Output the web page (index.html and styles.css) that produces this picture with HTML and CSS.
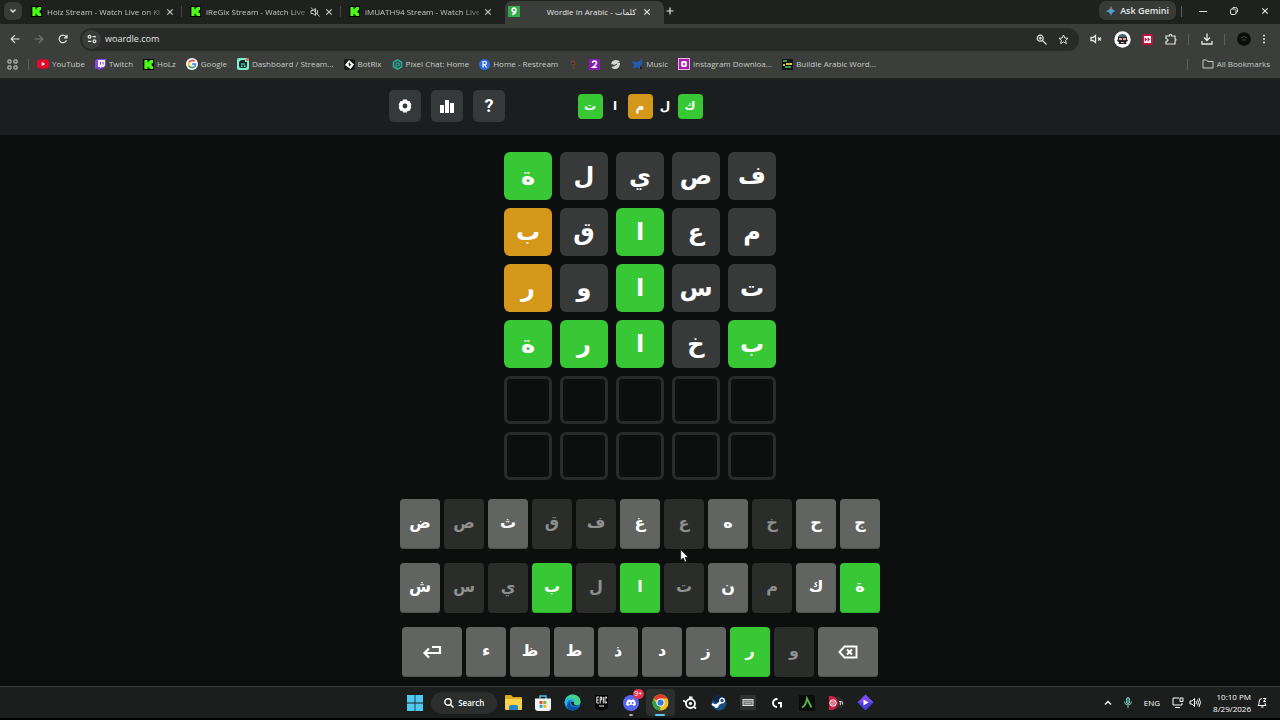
FILE: index.html
```html
<!DOCTYPE html>
<html lang="en">
<head>
<meta charset="utf-8">
<title>Wordle in Arabic - كلمات</title>
<link rel="stylesheet" href="styles.css">
</head>
<body>
<svg class="defs" aria-hidden="true">
  <symbol id="kick" viewBox="0 0 12 12"><path fill="#000" d="M0 0h12v12H0z"/><path fill="#4dfc16" d="M1.500 1h3.500v2.500h1V2h1.500V1H11v3.500H9.500v3H11V11H7.500v-1H6V8.500H5V11H1.500z"/></symbol>
  <symbol id="x" viewBox="0 0 8 8"><path d="M1.300 1.300l5.400 5.400M6.700 1.300L1.300 6.700" fill="none" stroke="currentColor" stroke-width="1.200"/></symbol>
</svg>

<div class="browser">
  <div class="tabstrip">
    <button class="tab-search" aria-label="Search tabs"><svg width="8" height="8" viewBox="0 0 8 8"><path d="M1.500 2.500L4 5l2.500-2.500" fill="none" stroke="currentColor" stroke-width="1.400"/></svg></button>
    <div class="tabs">
      <div class="tab"><svg width="11" height="11"><use href="#kick"/></svg><span class="tab-title">Holz Stream - Watch Live on Ki</span><button class="close" aria-label="Close tab"><svg width="8" height="8"><use href="#x"/></svg></button></div>
      <div class="tab"><svg width="11" height="11"><use href="#kick"/></svg><span class="tab-title">iReGix Stream - Watch Live</span><svg width="10" height="10" viewBox="0 0 10 10" fill="none" stroke="currentColor"><path d="M1 3.500h2L5.500 1.500v7L3 6.500H1zM7 3q1.500 2 0 4M1 .5l8.500 9"/></svg><button class="close" aria-label="Close tab"><svg width="8" height="8"><use href="#x"/></svg></button></div>
      <div class="tab"><svg width="11" height="11"><use href="#kick"/></svg><span class="tab-title">iMUATH94 Stream - Watch Live</span><button class="close" aria-label="Close tab"><svg width="8" height="8"><use href="#x"/></svg></button></div>
      <div class="tab active"><svg width="12" height="11" viewBox="0 0 12 11"><path fill="#32ad4a" d="M0 0h12v11H0z"/><path d="M8 4.500a2 2 0 1 1-.2-1.500q.8 5-3.800 5.500" fill="none" stroke="#fff" stroke-width="1.600"/></svg><span class="tab-title">Wordle in Arabic - <bdi>كلمات</bdi></span><button class="close" aria-label="Close tab"><svg width="8" height="8"><use href="#x"/></svg></button></div>
    </div>
    <button class="new-tab" aria-label="New tab"><svg width="8" height="8" viewBox="0 0 8 8"><path d="M4 .5v7M.5 4h7" stroke="currentColor" stroke-width="1.200"/></svg></button>
    <button class="gemini"><svg width="10" height="10" viewBox="0 0 10 10"><path fill="#4b9cf0" d="M5 0q.8 4.200 5 5-4.200.8-5 5-.8-4.200-5-5 4.200-.8 5-5"/><path fill="#e3594e" d="M5 0q.4 2.300 1.500 3.500h-3Q4.600 2.300 5 0"/><path fill="#3fb984" d="M0 5q2.500-.4 3.600-1.500L5 5 3.500 6.600Q2.300 5.500 0 5"/></svg>Ask Gemini</button>
    <span class="rule"></span>
    <div class="window-buttons">
      <button aria-label="Minimize"><svg width="8" height="8" viewBox="0 0 8 8"><path d="M0 4.500h8" stroke="currentColor"/></svg></button>
      <button aria-label="Restore"><svg width="8" height="8" viewBox="0 0 8 8" fill="none" stroke="currentColor"><rect x=".5" y="2" width="5.500" height="5.500" rx="1.500"/><path d="M2.300 1.800Q2.400.5 4 .5h1.500q2 0 2 2V4q0 1.500-1.300 1.700"/></svg></button>
      <button aria-label="Close"><svg width="8" height="8"><use href="#x"/></svg></button>
    </div>
  </div>

  <div class="toolbar">
    <div class="nav">
      <button aria-label="Back"><svg width="10" height="10" viewBox="0 0 10 10" fill="none" stroke="currentColor" stroke-width="1.200"><path d="M9.500 5H1.500M5 1.200L1.200 5 5 8.800"/></svg></button>
      <button class="dim" aria-label="Forward"><svg width="10" height="10" viewBox="0 0 10 10" fill="none" stroke="currentColor" stroke-width="1.200"><path d="M.5 5h8M5 1.200L8.800 5 5 8.800"/></svg></button>
      <button aria-label="Reload"><svg width="10" height="10" viewBox="0 0 10 10" fill="none" stroke="currentColor" stroke-width="1.200"><path d="M8.500 6.200A3.800 3.800 0 1 1 7.900 2.500L9 3.700M9 .8v3H6"/></svg></button>
    </div>
    <div class="omnibox">
      <button class="site" aria-label="Site information"><svg width="10" height="10" viewBox="0 0 10 10" fill="none" stroke="currentColor" stroke-width="1.200"><circle cx="2.500" cy="2.700" r="1.400"/><path d="M5.500 2.700H9M1 7.300h3.500"/><circle cx="7.500" cy="7.300" r="1.400"/></svg></button>
      <input type="text" value="woardle.com" aria-label="Address">
      <button aria-label="Zoom"><svg width="11" height="11" viewBox="0 0 11 11" fill="none" stroke="currentColor" stroke-width="1.200"><circle cx="4.200" cy="4.200" r="3"/><path d="M6.500 6.500l4 4M2.700 4.200h3M4.200 2.700v3"/></svg></button>
      <button aria-label="Bookmark this tab"><svg width="11" height="11" viewBox="0 0 11 11" fill="none" stroke="currentColor"><path d="M5.500 1l1.300 3 3.200.3-2.400 2.100.7 3.200-2.800-1.700-2.800 1.700.7-3.200L1 4.300 4.200 4z"/></svg></button>
    </div>
    <div class="extensions">
      <button aria-label="Muted"><svg width="12" height="10" viewBox="0 0 12 10" fill="none" stroke="currentColor" stroke-width="1.300"><path d="M1 3.500h2L5.500 1.500v7L3 6.500H1zM8 3.500l3 3M11 3.500l-3 3"/></svg></button>
      <button aria-label="Avatar extension"><svg width="17" height="17" viewBox="0 0 17 17"><circle cx="8.500" cy="8.500" r="8.200" fill="#fff"/><path fill="#3f6c73" d="M4 6q1-3 4.500-3T13 6z"/><path fill="#25262b" d="M4 6h9v2l1 2-2 1 .5 2h-8L5 11 3 10l1-2z"/><path fill="#dfa89b" d="M5 7h3v2H5zM9 7h3v2H9zM7 11h3v1H7z"/></svg></button>
      <button aria-label="Video speed"><svg width="11" height="11" viewBox="0 0 11 11"><rect width="11" height="11" rx="2" fill="#c4103c"/><path fill="#fff" d="M2 2h7v7H2z"/><path fill="#c4103c" d="M2.700 3.300l2.600 2.200-2.600 2.200zM5.600 3.300l2.600 2.200-2.600 2.200z"/></svg></button>
      <button class="puzzle" aria-label="Extensions"><svg width="12" height="12" viewBox="0 0 12 12" fill="none" stroke="currentColor" stroke-width="1.200"><path d="M1 3h3.500V2q1-1.500 2 0v1H10v3q2 .7 0 2v3H1V8.500q2-.2 2-1.500T1 5.500z"/></svg></button>
      <span class="rule"></span>
      <button aria-label="Downloads"><svg width="12" height="12" viewBox="0 0 12 12" fill="none" stroke="currentColor" stroke-width="1.300"><path d="M6 .5V7M3 4.500L6 7.500l3-3M1 8v3h10V8"/></svg></button>
      <span class="rule"></span>
      <button aria-label="Profile"><svg width="14" height="14" viewBox="0 0 14 14"><circle cx="7" cy="7" r="6.800" fill="#0c0d0c"/><path d="M4 6q3-3 6 0M5 8h4" stroke="#444" fill="none"/></svg></button>
      <button aria-label="Menu"><svg width="4" height="10" viewBox="0 0 4 10" fill="currentColor"><circle cx="2" cy="1.500" r="1"/><circle cx="2" cy="5" r="1"/><circle cx="2" cy="8.500" r="1"/></svg></button>
    </div>
  </div>

  <nav class="bookmarks">
    <button aria-label="Apps"><svg width="11" height="11" viewBox="0 0 11 11" fill="none" stroke="currentColor"><path d="M1 1h3v3H1zM7 1h3v3H7zM1 7h3v3H1zM7 7h3v3H7z"/></svg></button>
    <span class="rule"></span>
    <a href="#"><svg width="12" height="12" viewBox="0 0 12 12"><rect y="1.500" width="12" height="9" rx="2" fill="#e6082d"/><path fill="#fff" d="M4.800 4l3.400 2-3.400 2z"/></svg>YouTube</a>
    <a href="#"><svg width="11" height="11" viewBox="0 0 11 11"><path fill="#8a45e8" d="M2 0h9v7L8 9.500H6L4.500 11H3V9.500H0V2z"/><path fill="#eee" d="M3 1h7v5.500L8.500 8h-2L5 9.300V8H3z"/><path fill="#8a45e8" d="M5 3h1v2.500H5zM7.500 3h1v2.500h-1z"/></svg>Twitch</a>
    <a href="#"><svg width="11" height="11"><use href="#kick"/></svg>HoLz</a>
    <a href="#"><svg width="12" height="12" viewBox="0 0 12 12"><circle cx="6" cy="6" r="6" fill="#fff"/><g fill="none" stroke-width="1.700"><path stroke="#e94335" d="M3 4.200A3.600 3.600 0 0 1 8.500 3.400"/><path stroke="#fabc05" d="M3 4.200a3.600 3.600 0 0 0 0 3.600"/><path stroke="#34a853" d="M3 7.800a3.600 3.600 0 0 0 5.500.8"/><path stroke="#4285f4" d="M8.500 8.600Q9.500 7.600 9.500 6H6"/></g></svg>Google</a>
    <a href="#"><svg width="12" height="12" viewBox="0 0 12 12"><rect width="12" height="12" rx="2" fill="#7df0cb"/><path fill="#0a2c2a" d="M2 5q0-3 4-3h2v2h2v4q0 2-2 2H4Q2 10 2 8z"/><path fill="#7df0cb" d="M4 5.500h4v1H4zM4 7.500h1.500V9H4zM7 7.500h1.500V9H7z"/><circle cx="10.300" cy="1.500" r="1.500" fill="#f05a4e"/></svg>Dashboard / Stream...</a>
    <a href="#"><svg width="11" height="11" viewBox="0 0 11 11"><rect width="11" height="11" rx="2" fill="#17191a"/><path fill="#fff" d="M5 1l5 4.500L6.500 10 1 6z"/><path fill="#222" d="M4.500 4l2-.5L6 5l1.500.5L5 7.500z"/></svg>BotRix</a>
    <a href="#"><svg width="11" height="11" viewBox="0 0 11 11" fill="none" stroke="#21b89a"><path d="M5.500.8l4 2.300v4.800l-4 2.300-4-2.300V3.100z" stroke-width="1.400"/><path stroke-width="1.300" d="M4 9V5.500A1.600 1.600 0 1 1 5.500 7"/></svg>Pixel Chat: Home</a>
    <a href="#"><svg width="11" height="11" viewBox="0 0 11 11"><circle cx="5.500" cy="5.500" r="5.500" fill="#2d6be0"/><path d="M4 8.500v-6h2q1.500.2 1.500 1.600T6 5.700H4M5.700 5.700L7.500 8.500" fill="none" stroke="#fff" stroke-width="1.200"/></svg>Home - Restream</a>
    <a href="#" aria-label="Profile"><svg width="11" height="11" viewBox="0 0 11 11"><path fill="#684231" d="M3 2q2-2 4 0l1 3-2 2 1 3H4L5 7 3 5z"/><path fill="#252525" d="M4 4h2v1H4z"/></svg></a>
    <a href="#" aria-label="Two"><svg width="11" height="11" viewBox="0 0 11 11"><path fill="#8a1bb5" d="M0 0h11v11H0z"/><path d="M3.500 4Q3.700 2 5.500 2t2 1.700Q7.500 5 3.800 8.300h4" fill="none" stroke="#fff" stroke-width="1.500"/></svg></a>
    <a href="#" aria-label="Bird"><svg width="11" height="11" viewBox="0 0 11 11"><path fill="#d5d5d2" d="M1 5q1-4 5-4 3 0 4 2L7 4h3q0 5-4 6-4 0-4.500-2L5 7z"/><path d="M2 6q3 1 5-1" stroke="#333" fill="none"/></svg></a>
    <a href="#"><svg width="12" height="11" viewBox="0 0 12 11"><path fill="#235cae" d="M0 1l4 2h3l4-3v5L9 7v3L6 8l-4 2 1-4z"/><circle cx="10" cy="9" r="1" fill="#101010"/></svg>Music</a>
    <a href="#"><svg width="12" height="12" viewBox="0 0 12 12"><path fill="#e6b4e6" d="M0 0h12v12H0z"/><path fill="#a81caa" d="M1 1h10v10H1z"/><rect x="3" y="3" width="6" height="6" rx="2" fill="#fff"/><circle cx="6" cy="6" r="1.500" fill="#c858c4"/></svg>Instagram Downloa...</a>
    <a href="#"><svg width="11" height="11" viewBox="0 0 11 11"><path fill="#111" d="M0 0h11v11H0z"/><path fill="#2c9c52" d="M1 1h4v2H1zM3 7h6v2H3z"/><path fill="#d0c83d" d="M4 4h6v2H4zM1 5h2v2H1z"/></svg>Buildle Arabic Word...</a>
    <span class="rule push"></span>
    <a href="#"><svg width="12" height="10" viewBox="0 0 12 10" fill="none" stroke="currentColor"><path d="M1 1h3.500l1 1.500H11V9H1z"/></svg>All Bookmarks</a>
  </nav>
</div>

<header class="game-header">
  <div class="header-inner">
    <div class="actions">
      <button aria-label="Settings"><svg width="14" height="14" viewBox="0 0 14 14"><path fill="#fff" fill-rule="evenodd" d="M5 .5h4l.6 1.700 1.800-.2 2 3.400L12.600 7l.8 1.600-2 3.400-1.800-.2L9 13.500H5l-.6-1.700-1.800.2-2-3.400L1.400 7 .6 5.400 2.600 2l1.800.2zM7 4.600a2.400 2.400 0 1 0 0 4.800 2.400 2.400 0 0 0 0-4.800"/></svg></button>
      <button aria-label="Statistics"><svg width="14" height="14" viewBox="0 0 14 14" fill="#fff"><path d="M0 6h4v8H0zM5 1h4v13H5zM10 4h4v10h-4z"/></svg></button>
      <button aria-label="Help">?</button>
    </div>
    <h1 class="logo"><span class="hit">ت</span><span>ا</span><span class="near">م</span><span>ل</span><span class="hit">ك</span></h1>
  </div>
</header>

<main class="game">
  <div class="board">
    <span class="tile hit">ة</span><span class="tile miss">ل</span><span class="tile miss">ي</span><span class="tile miss">ص</span><span class="tile miss">ف</span>
    <span class="tile near">ب</span><span class="tile miss">ق</span><span class="tile hit">ا</span><span class="tile miss">ع</span><span class="tile miss">م</span>
    <span class="tile near">ر</span><span class="tile miss">و</span><span class="tile hit">ا</span><span class="tile miss">س</span><span class="tile miss">ت</span>
    <span class="tile hit">ة</span><span class="tile hit">ر</span><span class="tile hit">ا</span><span class="tile miss">خ</span><span class="tile hit">ب</span>
    <span class="tile"></span><span class="tile"></span><span class="tile"></span><span class="tile"></span><span class="tile"></span>
    <span class="tile"></span><span class="tile"></span><span class="tile"></span><span class="tile"></span><span class="tile"></span>
  </div>

  <div class="keyboard">
    <div class="row"><button>ض</button><button class="out">ص</button><button>ث</button><button class="out">ق</button><button class="out">ف</button><button>غ</button><button class="out">ع</button><button>ه</button><button class="out">خ</button><button>ح</button><button>ج</button></div>
    <div class="row"><button>ش</button><button class="out">س</button><button class="out">ي</button><button class="hit">ب</button><button class="out">ل</button><button class="hit">ا</button><button class="out">ت</button><button>ن</button><button class="out">م</button><button>ك</button><button class="hit">ة</button></div>
    <div class="row"><button class="wide" aria-label="Enter"><svg width="20" height="14" viewBox="0 0 20 14" fill="none" stroke="#fff" stroke-width="2.200"><path d="M10 2h8v6H3M7 3.500L2.500 8 7 12.500"/></svg></button><button>ء</button><button>ظ</button><button>ط</button><button>ذ</button><button>د</button><button>ز</button><button class="hit">ر</button><button class="out">و</button><button class="wide" aria-label="Backspace"><svg width="20" height="14" viewBox="0 0 20 14" fill="none" stroke="#fff" stroke-width="1.900"><path d="M6.500 1.500H18.500v11H6.500L1.500 7zM9 4.500l5 5M14 4.500L9 9.500"/></svg></button></div>
  </div>
</main>

<footer class="taskbar">
  <div class="apps">
    <button aria-label="Start"><svg width="16" height="16" viewBox="0 0 16 16" fill="#50c8f2"><path d="M0 0h7.600v7.600H0zM8.400 0H16v7.600H8.400zM0 8.400h7.600V16H0zM8.400 8.400H16V16H8.400z"/></svg></button>
    <button class="search"><svg width="10" height="10" viewBox="0 0 10 10" fill="none" stroke="currentColor" stroke-width="1.400"><circle cx="4" cy="4" r="3.200"/><path d="M6.300 6.300L9.500 9.500"/></svg>Search</button>
    <button aria-label="Files"><svg width="17" height="15" viewBox="0 0 17 15"><path fill="#e0a81e" d="M0 1q0-1 1-1h5l2 2h8q1 0 1 1v5H0z"/><path fill="#fbd34b" d="M0 4h17v10q0 1-1 1H1q-1 0-1-1z"/><path fill="#2688cc" d="M4 15v-3q0-2 2-2h5q2 0 2 2v3z"/></svg></button>
    <button aria-label="Store"><svg width="16" height="16" viewBox="0 0 16 16"><path d="M5 4V1h6v3" fill="none" stroke="#55bfe8" stroke-width="1.400"/><path fill="#eef3f5" d="M0 3.500h16V13q0 3-3 3H3q-3 0-3-3z"/><path fill="#e8532b" d="M4.500 6h3v3h-3z"/><path fill="#7cb82f" d="M8.300 6h3v3h-3z"/><path fill="#29a3df" d="M4.500 9.800h3v3h-3z"/><path fill="#f2b620" d="M8.300 9.800h3v3h-3z"/></svg></button>
    <button aria-label="Edge"><svg width="17" height="17" viewBox="0 0 17 17"><circle cx="8.500" cy="8.500" r="8" fill="#1684d8"/><path fill="#45d28a" d="M2 4Q5 .3 9 .5q7 .5 7.500 7 0 3.500-3.500 3.500-3 0-3-2 1-4-3-5Q4 3.500 1 7z"/><path fill="#2bb8dd" d="M.7 7Q3 2.500 8 4q3 1.500 2 4Q7 4.500 4 7q-2 2-1 5Q.2 10 .7 7"/><path fill="#0b4fa5" d="M6 7.500Q5 13 11 13q2.500 0 4.500-1-3 4.500-7 4.500Q2 15 3.500 10 4 8 6 7.500"/><path fill="#1b1e1c" d="M7.300 8q-.5 3.500 3.700 4 2 .2 4.500-1-2 1-4.200.2Q9 10.500 10 8z"/></svg></button>
    <button aria-label="Epic Games"><svg width="15" height="16" viewBox="0 0 15 16"><path fill="#050505" d="M1 0h13v13l-6.500 3L1 13z"/><path d="M5 2H2.800v6H5M2.800 5H4.700M6.200 8.500V2h1.500v3H6.200M9.300 2v6.500M12.500 3.500V2H11v6h1.500V6.500M5 11h5" fill="none" stroke="#eee"/></svg></button>
    <button aria-label="Discord" class="running"><svg width="18" height="18" viewBox="0 0 18 18"><circle cx="9" cy="9" r="8" fill="#5865f2"/><path fill="#fff" d="M5.500 6l2-.7.6.8h1.800l.6-.8 2 .7q1.500 2.500 1.200 5l-2.200 1-.8-1.200H7.300L6.500 12l-2.200-1Q4 8.500 5.500 6"/><circle cx="7.300" cy="9" r="1" fill="#5865f2"/><circle cx="10.700" cy="9" r="1" fill="#5865f2"/></svg><span class="badge">9+</span></button>
    <button aria-label="Chrome" class="running current"><svg width="17" height="17" viewBox="0 0 17 17"><circle cx="8.500" cy="8.500" r="8" fill="#fbc116"/><path fill="#e33b2e" d="M1.600 4.500a8 8 0 0 1 13.800 0H8.500v4z"/><path fill="#2ca14c" d="M1.600 4.500L5 10.500q1.500 2 3.500 2L8 16.500A8 8 0 0 1 1.600 4.500"/><circle cx="8.500" cy="8.500" r="4" fill="#fff"/><circle cx="8.500" cy="8.500" r="3.100" fill="#3478e5"/></svg></button>
    <button aria-label="SteelSeries"><svg width="14" height="14" viewBox="0 0 14 14" fill="none" stroke="#fff"><circle cx="7.500" cy="7.500" r="4.500" stroke-width="1.800"/><circle cx="7.500" cy="7.500" r="1.200" fill="#fff"/><path stroke-width="1.800" d="M0 4.500l3.500 1.800M6 1.500h3.500M11 11l2 1.500"/></svg></button>
    <button aria-label="Steam"><svg width="16" height="16" viewBox="0 0 16 16"><circle cx="8" cy="8" r="7.500" fill="#174f83"/><path fill="#102648" d="M1 5a7.500 7.500 0 0 1 14 0L8 8z"/><path d="M1 9l4 2 6-5" stroke="#fff" stroke-width="2.500" fill="none"/><circle cx="11" cy="5.500" r="2.300" fill="#174f83" stroke="#fff" stroke-width="1.300"/><circle cx="5.500" cy="11" r="2" fill="#fff"/></svg></button>
    <button aria-label="Keyboard"><svg width="16" height="15" viewBox="0 0 16 15"><path fill="#303230" d="M0 0h16v15H0z"/><rect x="3" y="4.500" width="10" height="6" fill="#777" stroke="#ddd"/><path d="M4.500 6.500h7M5.500 8.500h5" stroke="#eee" stroke-dasharray="1 1"/></svg></button>
    <button aria-label="Logitech G Hub"><svg width="12" height="12" viewBox="0 0 12 12" fill="none" stroke="#fff" stroke-width="2"><path d="M6.500 2H6a4 4 0 0 0 0 8M7 6h3v4.500"/></svg></button>
    <button aria-label="Arma"><svg width="16" height="16" viewBox="0 0 16 16"><path fill="#090d09" d="M0 0h16v16H0z"/><path d="M3 12.500q4-2 5-9l4.500 9" fill="none" stroke="#58b744" stroke-width="1.800"/></svg></button>
    <button aria-label="TV"><svg width="16" height="16" viewBox="0 0 16 16"><path fill="#2b2c2b" d="M5 2h6q5 2 5 6t-5 6H5z"/><path fill="#d21f45" d="M1 1q8-1 9 7-1 8-9 7z"/><circle cx="5" cy="8" r="3.200" fill="none" stroke="#fff"/><path d="M4 6v4M6 6v4M11 6.500h2.500M12.300 6.500V10M14 6.500l.7 3" stroke="#ddd" fill="none"/></svg></button>
    <button aria-label="Player"><svg width="17" height="17" viewBox="0 0 17 17"><path fill="#493ce0" d="M8.500.5l8 8-8 8-8-8z"/><path fill="#7b4cf0" d="M8.500.5l8 8H.5z"/><path fill="#fff" d="M6.500 5.500l5 3-5 3z"/></svg></button>
  </div>
  <div class="tray">
    <button aria-label="Hidden icons"><svg width="8" height="8" viewBox="0 0 8 8"><path d="M1 5.500l3-3 3 3" fill="none" stroke="currentColor" stroke-width="1.300"/></svg></button>
    <button aria-label="Microphone"><svg width="8" height="11" viewBox="0 0 8 11" fill="none" stroke="#77c5b2"><rect x="2.500" y=".5" width="3" height="6" rx="1.500" fill="#3c776b"/><path d="M.5 4.500Q.7 8 4 8t3.500-3.500M4 8v3"/></svg></button>
    <button>ENG</button>
    <button class="status" aria-label="Network and sound"><svg width="12" height="11" viewBox="0 0 12 11" fill="none" stroke="currentColor"><path d="M7 1H1v7h9V6M3 10.500h5M8 1h3v3.500H8z"/></svg><svg width="12" height="11" viewBox="0 0 12 11" fill="none" stroke="currentColor"><path d="M1 4h2l2.500-2.500v8L3 7H1zM7 4q1 1.500 0 3M8.500 2.500q2 3 0 6M10 1q3 4.500 0 9"/></svg></button>
    <button class="clock"><span>10:10 PM</span><span>8/29/2026</span></button>
    <button aria-label="Notifications"><svg width="10" height="11" viewBox="0 0 10 11" fill="none" stroke="currentColor"><path d="M5 1.500Q2 1.500 2 5v2L1 8.500h8L8 7V6M4 10h2.500M6 1.500h3L6.500 4.500H9"/></svg></button>
  </div>
</footer>

<svg class="pointer" width="9" height="14" viewBox="0 0 9 14" aria-hidden="true"><path d="M.7.7v10.500l2.500-2.300 1.700 4 1.800-.8L5 8.300h3.300z" fill="#fff" stroke="#111" stroke-width=".7"/></svg>
</body>
</html>
```
FILE: styles.css
```css
* { box-sizing: border-box; }

body {
  margin: 0;
  min-height: 100vh;
  display: flex;
  flex-direction: column;
  background: #0c0f0d;
  color: #e3e5e3;
  font: 8px/12px "Open Sans", "Noto Sans", "DejaVu Sans", sans-serif;
}

button, input { font: inherit; color: inherit; background: none; border: 0; padding: 0; margin: 0; }
button { display: flex; align-items: center; justify-content: center; }
a { color: inherit; text-decoration: none; }
svg { flex: none; display: block; }
.defs { position: absolute; width: 0; height: 0; }
.rule { width: 1px; height: 11px; background: #5b5e5b; }
.hit { background: #38c836; }
.near { background: #d5971a; }

/* Browser window */
.browser { background: #3b3e3b; border-bottom: 1px solid #252725; }

.tabstrip { display: flex; align-items: center; height: 24px; background: #1e211e; }
.tab-search { width: 18px; height: 18px; margin: 0 6px 2px 4px; border-radius: 6px; background: #383b38; }
.tabs { display: flex; align-self: stretch; padding-top: 1px; }
.tab { display: flex; align-items: center; width: 159px; gap: 5px; padding: 0 13px 2px 3px; position: relative; color: #c5c8c5; }
.tab + .tab::before { content: ""; position: absolute; left: -6px; top: 5px; width: 1px; height: 11px; background: #444744; }
.tab-title { flex: 1; min-width: 0; white-space: nowrap; mask-image: linear-gradient(90deg, #000 85%, rgb(0 0 0 / 40%)); }
.tab .close { width: 8px; height: 16px; }
.tab.active { background: #3b3e3b; border-radius: 7px 7px 0 0; color: #e3e5e3; }
.tab.active::before { display: none; }
.active .tab-title { text-align: right; mask-image: none; padding-right: 2px; }
.new-tab { width: 16px; height: 16px; margin: 0 auto 2px -2px; }
.gemini { gap: 4px; height: 19px; padding: 0 7px; margin-bottom: 3px; border-radius: 7px; background: #373a37; font-size: 9px; font-weight: 600; }
.tabstrip > .rule { margin: 0 5px 2px; }
.window-buttons { display: flex; padding-bottom: 2px; }
.window-buttons button { width: 31px; height: 16px; }

.toolbar { display: flex; align-items: center; height: 30px; padding: 0 8px 0 5px; }
.nav { display: flex; width: 75px; gap: 4px; }
.nav button { width: 20px; height: 20px; }
.dim { color: #777a77; }
.omnibox { flex: 1; display: flex; align-items: center; height: 23px; border-radius: 12px; background: #282b28; padding: 0 10px 0 2px; gap: 11px; }
.omnibox input { flex: 1; min-width: 0; font-size: 9px; outline: 0; margin-left: -7px; }
.site { width: 19px; height: 19px; border-radius: 50%; background: #3a3d3a; }
.extensions { display: flex; align-items: center; justify-content: space-between; width: 182px; margin-left: 11px; padding-right: 6px; }

.bookmarks { display: flex; align-items: center; height: 24px; padding: 0 10px 4px 7px; gap: 10px; color: #c8cbc8; white-space: nowrap; }
.bookmarks a { display: flex; align-items: center; gap: 3px; }
.bookmarks .rule { margin-right: -2px; }
.bookmarks .push { margin: 0 4px 0 auto; }

/* Game header */
.game-header { background: #1b1e1f; padding: 11px 16px 13px; }
.header-inner { display: grid; grid-template-columns: 1fr auto 1fr; align-items: center; max-width: 502px; margin: 0 auto; }
.actions { display: flex; gap: 10px; }
.actions button { width: 32px; height: 32px; border-radius: 5px; background: #363939; color: #fff; font: bold 18px/24px "Roboto", sans-serif; }
.logo { display: flex; margin: 0; font: bold 12px/24px "DejaVu Sans", sans-serif; color: #fff; }
.logo span { width: 25px; height: 25px; border-radius: 4px; text-align: center; }

/* Board */
.game { flex: 1; display: flex; flex-direction: column; align-items: center; padding: 17px 16px 8px; }
.board { display: grid; grid-template-columns: repeat(5, 48px); grid-auto-rows: 48px; gap: 8px; }
.tile { display: flex; align-items: center; justify-content: center; border-radius: 6px; font: bold 24px/40px "DejaVu Sans", sans-serif; color: #fff; }
.tile:empty { border: 3px solid #282b29; }
.miss { background: #383a3a; }

/* Keyboard */
.keyboard { display: grid; gap: 14px; margin-top: 19px; }
.row { display: flex; justify-content: center; gap: 4px; }
.row button { width: 40px; height: 50px; padding-bottom: 2px; border-radius: 4px; background: #626462; color: #fff; font: bold 16px/24px "DejaVu Sans", sans-serif; box-shadow: inset 0 -1px 0 #505250; }
.row .wide { width: 60px; padding: 0; }
.row .out { background: #2b2d2b; color: #8e908e; box-shadow: none; }
.row .hit { background: #38c836; box-shadow: inset 0 -1px 0 #2eab2d; }

/* Taskbar */
.taskbar { display: grid; grid-template-columns: 1fr 480px 1fr; align-items: center; height: 34px; background: #1b1e1c; border-top: 1px solid #3a3d3b; border-bottom: 2px solid #000; color: #fff; }
.apps { grid-column: 2; display: flex; align-items: center; }
.apps button { flex: 1; height: 27px; position: relative; }
.apps .search { flex: 0 0 66px; margin: 0 2px; height: 22px; gap: 4px; border-radius: 11px; background: #2b2e2c; font-weight: 600; }
.apps .current { background: #2d302e; border-radius: 4px; }
.running::after { content: ""; position: absolute; bottom: 0; left: 50%; width: 4px; height: 2px; margin-left: -2px; border-radius: 1px; background: #a9acaa; }
.current::after { width: 10px; margin-left: -5px; background: #5cc8f5; }
.badge { position: absolute; top: 0; right: 2px; width: 11px; height: 10px; border-radius: 5px; background: #e0334c; font-size: 7px; line-height: 10px; text-align: center; }
.tray { display: flex; align-items: center; justify-content: flex-end; gap: 12px; padding-right: 13px; }
.status { gap: 5px; }
.clock { flex-direction: column; align-items: flex-end; margin-right: -6px; }

.pointer { position: absolute; left: 680px; top: 549px; }
```
